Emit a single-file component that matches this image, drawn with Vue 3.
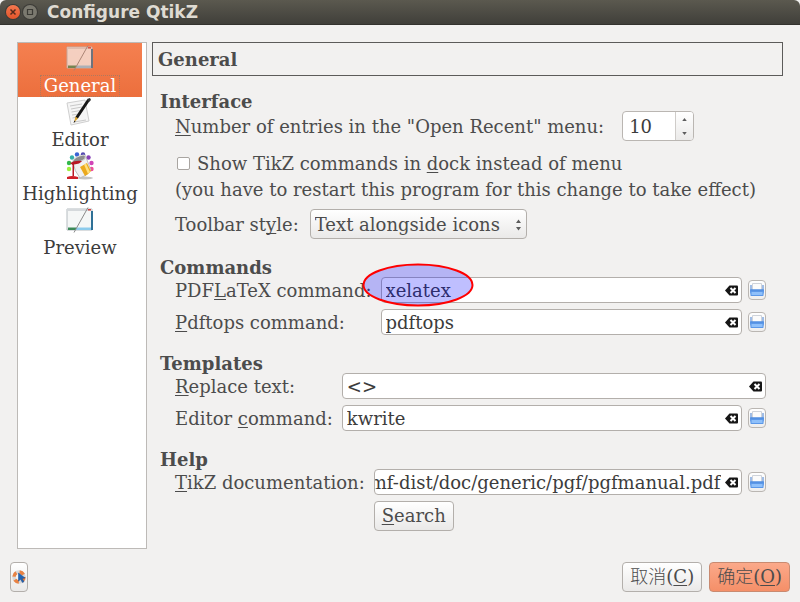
<script setup>
import { onMounted, ref } from 'vue'

const pages = ['General', 'Editor', 'Highlighting', 'Preview']
const current = ref('General')
const recent = ref(10)
const inDock = ref(false)
const toolbarStyle = ref('Text alongside icons')
const pdflatex = ref('xelatex')
const pdftops = ref('pdftops')
const replaceText = ref('<>')
const editorCommand = ref('kwrite')
const documentation = ref('mf-dist/doc/generic/pgf/pgfmanual.pdf')
const docInput = ref(null)

// Keep the file name at the end of a long path in view.
onMounted(() => {
  docInput.value.scrollLeft = docInput.value.scrollWidth
})
</script>

<template>
  <div class="dialog">
    <svg class="symbols" aria-hidden="true">
      <symbol id="clear" viewBox="0 0 13 11">
        <path d="M0 5.500 4.500.500h7.500q1 0 1 1v8q0 1-1 1H4.500z" fill="#161616" />
        <path d="m5.500 3 5 5m0-5-5 5" stroke="#fff" stroke-width="2" />
      </symbol>
      <symbol id="browse" viewBox="0 0 16 16">
        <path d="M3.500 1.500h9v7h-9z" fill="#fbfbfb" stroke="#cfd3da" />
        <path d="M2 3v6M14 3v6" stroke="#7aa3de" stroke-width="1.400" />
        <path d="M1 7.500h14v2.500l-.7 4H1.700L1 10z" fill="#5c98e8" />
        <path d="M1.500 8h13" stroke="#4a88dc" />
        <path d="M2.500 10h11v3h-11z" fill="#8fc0fa" />
      </symbol>
      <symbol id="window" viewBox="0 0 28 25">
        <path d="M1 1.500h25v21H1z" fill="#f5f7f7" stroke="#b5bcc0" />
        <path d="M1 1.500h25v2H1z" fill="#d5d9dc" />
        <path d="M22 1.500h3V3h-3z" fill="#d54040" />
        <path d="M2 20h8v2.500H2z" fill="#3c8a58" />
        <path d="M10 20h16v2.500H10z" fill="#8ccbec" />
        <path d="M25 3.500h2v19h-2z" fill="#2f7096" />
        <path d="M22 0 8 25" stroke="#8a8a8a" />
      </symbol>
    </svg>

    <header class="titlebar">
      <button class="win close" aria-label="Close"><svg viewBox="0 0 14 14"><path d="m4.500 4.500 5 5m0-5-5 5" stroke="#542a1c" stroke-width="1.500" /></svg></button>
      <button class="win" aria-label="Maximize"><svg viewBox="0 0 14 14"><path d="M4.500 4.500h5v5h-5z" fill="none" stroke="#3b3a35" stroke-width="1.200" /></svg></button>
      <h1>Configure QtikZ</h1>
    </header>

    <div class="body">
      <nav class="pages">
        <button v-for="p in pages" :key="p" class="page" :class="{ selected: p === current }" @click="current = p">
          <svg v-if="p === 'General'" class="picon faded"><use href="#window" width="28" height="28" /></svg>
          <svg v-else-if="p === 'Preview'" class="picon"><use href="#window" width="28" height="28" /></svg>
          <svg v-else-if="p === 'Editor'" class="picon" viewBox="0 0 28 28">
            <path d="m1 5 18-3 4 21-18 4z" fill="#f5f5f5" stroke="#cfcfcf" />
            <path d="m4 8 12-2M5 11l11-2M5.500 14l9-1.500M6 17l7-1M6.500 20l4-.7M8 24l12-2" stroke="#c8c8c8" />
            <path d="M22.500 2 10.500 20" stroke="#161616" stroke-width="3" />
            <path d="m21 1 3-1 1 2-2 2z" fill="#333" />
            <path d="m9.500 18.500 2.500 2-4 4z" fill="#d9a534" />
            <path d="m8.500 22.500-1 2.500 2-1.500z" fill="#111" />
          </svg>
          <svg v-else class="picon" viewBox="0 0 28 28">
            <circle cx="3" cy="17" r="2.200" fill="#9cf03c" /><circle cx="3" cy="11" r="2.200" fill="#32b84c" />
            <circle cx="6" cy="5.500" r="2.200" fill="#36afa9" /><circle cx="11" cy="2.500" r="2.200" fill="#3a62d4" />
            <circle cx="17" cy="2.500" r="2.200" fill="#5349b0" /><circle cx="22.500" cy="5.500" r="2.200" fill="#8842b7" />
            <circle cx="25.500" cy="11" r="2.200" fill="#d044b7" /><circle cx="25.500" cy="17" r="2.200" fill="#ef4d98" />
            <ellipse cx="19" cy="26" rx="8" ry="1.500" fill="#c5c5c5" />
            <path d="M7 10Q12 5 19 3l6 15q-4 6-11 8Q8 19 7 10" fill="#f1f1f1" stroke="#b0b0b0" stroke-width=".8" />
            <path d="M6 10Q9 4 18 3q2 1 1 4-5 4-12 4z" fill="#8e8e8e" stroke="#d8d8d8" />
            <path d="m14 15 7-4 4 8q-3 4-6 5z" fill="#eba91c" />
            <path d="m18 12.500 2-1 4 8.500-2 2z" fill="#ffdf7c" />
            <path d="M4 11q6-3 12-2-2 3-8 3.500V24H6.500V13z" fill="#b81824" />
            <path d="M1 25q5-2 11 0v2H1z" fill="#cf1f28" />
          </svg>
          <span>{{ p }}</span>
        </button>
      </nav>

      <main class="content">
        <h2 class="banner">General</h2>

        <section>
          <h3>Interface</h3>
          <div class="line recent-line">
            <label for="recent"><u>N</u>umber of entries in the "Open Recent" menu:</label>
            <span class="spin">
              <input id="recent" v-model="recent" type="text" inputmode="numeric">
              <span class="steps">
                <button aria-label="Increase" @click="recent++"><svg viewBox="0 0 6 4"><path d="m0 4 3-4 3 4z" /></svg></button>
                <button aria-label="Decrease" @click="recent--"><svg viewBox="0 0 6 4"><path d="m0 0 3 4 3-4z" /></svg></button>
              </span>
            </span>
          </div>
          <div class="line check">
            <input id="dock" v-model="inDock" type="checkbox">
            <label for="dock">Show TikZ commands in <u>d</u>ock instead of menu</label>
          </div>
          <p class="note">(you have to restart this program for this change to take effect)</p>
          <div class="line style-line">
            <label for="style">Toolbar st<u>y</u>le:</label>
            <span class="combo">
              <select id="style" v-model="toolbarStyle"><option>Text alongside icons</option></select>
              <svg viewBox="0 0 6 13"><path d="m0 4 3-4 3 4zM0 9l3 4 3-4z" /></svg>
            </span>
          </div>
        </section>

        <section>
          <h3>Commands</h3>
          <div class="fields">
            <label for="pdflatex">PDF<u>L</u>aTeX command:</label>
            <span class="field">
              <input id="pdflatex" v-model="pdflatex" type="text">
              <button class="clear" aria-label="Clear" @click="pdflatex = ''"><svg><use href="#clear" /></svg></button>
              <svg class="highlight" viewBox="0 0 112 44"><ellipse cx="56" cy="22" rx="54.500" ry="20.500" /></svg>
            </span>
            <button class="browse" aria-label="Browse"><svg><use href="#browse" /></svg></button>
            <label for="pdftops"><u>P</u>dftops command:</label>
            <span class="field">
              <input id="pdftops" v-model="pdftops" type="text">
              <button class="clear" aria-label="Clear" @click="pdftops = ''"><svg><use href="#clear" /></svg></button>
            </span>
            <button class="browse" aria-label="Browse"><svg><use href="#browse" /></svg></button>
          </div>
        </section>

        <section>
          <h3>Templates</h3>
          <div class="fields">
            <label for="replace"><u>R</u>eplace text:</label>
            <span class="field wide">
              <input id="replace" v-model="replaceText" type="text">
              <button class="clear" aria-label="Clear" @click="replaceText = ''"><svg><use href="#clear" /></svg></button>
            </span>
            <label for="editor">Editor <u>c</u>ommand:</label>
            <span class="field">
              <input id="editor" v-model="editorCommand" type="text">
              <button class="clear" aria-label="Clear" @click="editorCommand = ''"><svg><use href="#clear" /></svg></button>
            </span>
            <button class="browse" aria-label="Browse"><svg><use href="#browse" /></svg></button>
          </div>
        </section>

        <section>
          <h3>Help</h3>
          <div class="fields">
            <label for="docs"><u>T</u>ikZ documentation:</label>
            <span class="field path">
              <input id="docs" ref="docInput" v-model="documentation" type="text">
              <button class="clear" aria-label="Clear" @click="documentation = ''"><svg><use href="#clear" /></svg></button>
            </span>
            <button class="browse" aria-label="Browse"><svg><use href="#browse" /></svg></button>
            <button class="push search"><u>S</u>earch</button>
          </div>
        </section>
      </main>
    </div>

    <footer class="footer">
      <button class="push help" aria-label="What's this?">
        <svg viewBox="0 0 14 14">
          <circle cx="7" cy="7" r="5" fill="none" stroke="#d8d8d8" stroke-width="3.500" />
          <circle cx="7" cy="7" r="5" fill="none" stroke="#e98243" stroke-width="3.500" stroke-dasharray="4.500 3.350" />
          <path d="m6.500 3 6.500 5-3 .4 2 3.200-1.500 1-2-3.400-2 2z" fill="#2165b5" stroke="#174b91" stroke-width=".5" />
        </svg>
      </button>
      <button class="push cancel">取消(<u>C</u>)</button>
      <button class="push ok">确定(<u>O</u>)</button>
    </footer>
  </div>
</template>

<style>
body {
  margin: 0;
  background: #f2f1f0;
}
</style>

<style scoped>
* {
  box-sizing: border-box;
}
.dialog {
  display: flex;
  flex-direction: column;
  min-height: 100vh;
  background: #f2f1f0;
  color: #4c4c4c;
  font: 18px/20px "DejaVu Serif", "Noto Sans CJK SC", serif;
}
.symbols {
  position: absolute;
  width: 0;
  height: 0;
}
button, input, select {
  margin: 0;
  padding: 0;
  border: 0;
  background: none;
  color: inherit;
  font: inherit;
}
input, select {
  outline: 0;
}
svg {
  display: block;
}
u {
  text-decoration-thickness: 1px;
  text-underline-offset: 2px;
  text-decoration-skip-ink: none;
}
h1, h2, h3, p {
  margin: 0;
  font-size: inherit;
}
label {
  padding-top: 2px;
}
.titlebar {
  display: flex;
  align-items: center;
  gap: 3px;
  height: 25px;
  padding: 0 6px;
  border-bottom: 1px solid #33322e;
  border-radius: 6px 6px 0 0;
  background: linear-gradient(#5b594f, #403f3a);
}
.titlebar h1 {
  margin-left: 7px;
  color: #dfdbd2;
  font: bold 17px/24px "DejaVu Sans", sans-serif;
}
.win {
  width: 14px;
  height: 14px;
  border-radius: 50%;
  background: #7b796f;
  box-shadow: 0 0 0 1px #3c3b37;
}
.close {
  background: linear-gradient(#f5784f, #e2542a);
}
.body {
  display: flex;
  flex: 1;
  gap: 5px;
  padding: 17px 17px 13px;
}
.pages {
  flex: none;
  width: 130px;
  padding-right: 4px;
  border: 1px solid #bdbab7;
  background: #fff;
}
.page {
  display: flex;
  flex-direction: column;
  align-items: center;
  width: 100%;
  height: 54px;
  padding-top: 1px;
  color: #3c3c3c;
}
.page span {
  padding: 0 3px;
  border: 1px solid transparent;
  line-height: 20px;
}
.selected {
  background: linear-gradient(#f58050, #ec6f3d);
  color: #fff;
}
.selected span {
  border: 1px dotted #b0785e;
}
.picon {
  width: 28px;
  height: 28px;
  margin-bottom: 3px;
}
.faded {
  opacity: .68;
}
.content {
  flex: 1;
  min-width: 0;
}
.banner {
  height: 34px;
  margin-bottom: 15px;
  padding-left: 5px;
  border: 1px solid #5c5b5a;
  line-height: 34px;
}
section {
  margin-bottom: 18px;
  padding: 0 17px 0 23px;
}
h3 {
  height: 20px;
  margin-left: -15px;
  line-height: 22px;
}
.line {
  display: flex;
  align-items: center;
  gap: 11px;
}
.recent-line {
  gap: 18px;
}
.spin {
  display: flex;
  width: 72px;
  height: 30px;
  overflow: hidden;
  border: 1px solid #bab6b2;
  border-radius: 4px;
  background: #fff;
}
.spin input {
  flex: 1;
  min-width: 0;
  padding: 2px 0 0 6px;
  color: #3c3c3c;
}
.steps {
  display: flex;
  flex-direction: column;
  width: 18px;
  border-left: 1px solid #cfccc9;
  background: linear-gradient(#fff, #ebeae9);
}
.steps button {
  display: grid;
  flex: 1;
  place-items: center;
}
.steps svg {
  width: 5px;
  height: 3px;
  fill: #5c5c5c;
}
.check {
  gap: 7px;
  height: 26px;
  margin-top: 9px;
}
.check input {
  width: 13px;
  height: 13px;
  margin-left: 2px;
  border: 1px solid #a9a5a1;
  border-radius: 2px;
  appearance: none;
  background: #fff;
}
.check input:checked {
  background: #ec6f3d;
}
.note {
  height: 26px;
  line-height: 28px;
  white-space: nowrap;
}
.style-line {
  margin-top: 7px;
}
.combo {
  position: relative;
}
.combo select {
  display: block;
  height: 30px;
  padding: 1px 25px 0 4px;
  appearance: none;
  border: 1px solid #b3afab;
  border-radius: 4px;
  background: linear-gradient(#fff, #eae9e8);
}
.combo svg {
  position: absolute;
  top: 10px;
  right: 6px;
  width: 5px;
  height: 12px;
  fill: #5c5c5c;
  pointer-events: none;
}
.fields {
  display: grid;
  grid-template-columns: auto 1fr auto;
  align-items: center;
  gap: 6px;
}
.fields label {
  padding-right: 3px;
}
.field {
  position: relative;
  display: flex;
  align-items: center;
  min-width: 0;
  height: 26px;
  padding: 0 3px 0 4px;
  border: 1px solid #b3afab;
  border-radius: 4px;
  background: #fff;
}
.field input {
  flex: 1;
  width: 0;
  min-width: 0;
  height: 24px;
  color: #3c3c3c;
}
.path {
  padding-left: 0;
}
.wide {
  grid-column: 2 / 4;
}
.clear {
  margin-left: 4px;
}
.clear svg {
  width: 13px;
  height: 11px;
}
.browse {
  display: grid;
  place-items: center;
  width: 18px;
  height: 20px;
  border: 1px solid #bab6b2;
  border-radius: 4px;
  background: linear-gradient(#fff, #efeeed);
}
.browse svg {
  width: 16px;
  height: 16px;
}
.highlight {
  position: absolute;
  top: -15px;
  left: -20px;
  width: 112px;
  height: 44px;
  fill: rgb(0 0 255 / 25%);
  stroke: #f00;
  stroke-width: 2;
  pointer-events: none;
}
.push {
  height: 30px;
  padding: 0 7px;
  border: 1px solid #b3afab;
  border-radius: 4px;
  background: linear-gradient(#fff, #eae9e8);
  white-space: nowrap;
}
.search {
  grid-column: 2;
  justify-self: start;
}
.footer {
  display: flex;
  gap: 7px;
  padding: 0 10px 10px;
}
.help {
  width: 18px;
  margin-right: auto;
  padding: 0 1px;
}
.help svg {
  width: 14px;
  height: 14px;
}
.cancel, .ok {
  font-weight: 300;
}
.ok {
  border-color: #c98a70;
  background: linear-gradient(#fba98a, #f58f68);
}
</style>
